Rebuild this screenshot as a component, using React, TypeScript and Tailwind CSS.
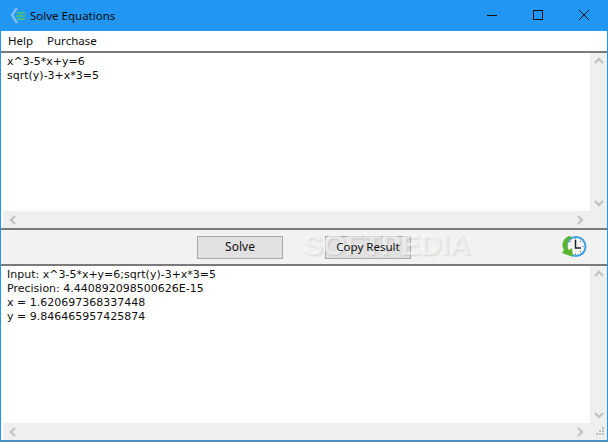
import React from 'react';

const font = { fontFamily: '"Noto Sans", "Liberation Sans", sans-serif' };

const Chevron = ({ dir }: { dir: 'up' | 'down' | 'left' | 'right' }) => {
  const d = {
    up: 'M1 7 L5 3 L9 7',
    down: 'M1 3 L5 7 L9 3',
    left: 'M7 1 L3 5 L7 9',
    right: 'M3 1 L7 5 L3 9',
  }[dir];
  return (
    <svg width="10" height="10" viewBox="0 0 10 10" fill="none">
      <path d={d} stroke="#c4c4c4" strokeWidth="2.4" />
    </svg>
  );
};

const TextPanel = ({ lines, grip, className }: { lines: string[]; grip?: boolean; className: string }) => (
  <div className={`flex flex-col border-t-2 border-[#7a7a7a] ${className}`}>
    <div className="flex flex-1 min-h-0">
      <div
        className="flex-1 bg-white pl-[6px] pt-[2px] text-[11px] leading-[14px] text-[#101010]"
        style={{ fontFamily: '"DejaVu Sans", sans-serif' }}
      >
        {lines.map((l) => (
          <div key={l} className="whitespace-pre">{l}</div>
        ))}
      </div>
      <div className="flex w-[17px] flex-col items-center justify-between bg-[#efefef] py-[3px]">
        <Chevron dir="up" />
        <Chevron dir="down" />
      </div>
    </div>
    <div className="ml-[2px] flex h-[17px] items-center justify-between bg-[#efefef] pl-[5px] pr-[2px]">
      <Chevron dir="left" />
      <div className="flex items-center">
        <Chevron dir="right" />
        <div className="flex w-[20px] justify-end">
          {grip && (
            <svg width="9" height="9" viewBox="0 0 9 9" fill="#bdbdbd">
              <rect x="6" y="0" width="2" height="2" />
              <rect x="3" y="3" width="2" height="2" />
              <rect x="6" y="3" width="2" height="2" />
              <rect x="0" y="6" width="2" height="2" />
              <rect x="3" y="6" width="2" height="2" />
              <rect x="6" y="6" width="2" height="2" />
            </svg>
          )}
        </div>
      </div>
    </div>
  </div>
);

export default function App() {
  return (
    <div className="relative flex h-[442px] w-[608px] flex-col overflow-hidden border-x border-b-2 border-x-[#2196f3] border-b-[#4a8fc0] bg-white" style={font}>
      <div className="flex h-[31px] shrink-0 items-center bg-[#2196f3] pl-[9px]">
        <svg width="20" height="20" viewBox="0 0 20 20" fill="none">
          <path d="M7 2 L2 9 L7 17" stroke="#7dbcf0" strokeWidth="2.5" />
          <path d="M7 7 H15 M6 10 H15 M7 13 H15" stroke="#45c08c" strokeWidth="2" />
        </svg>
        <span className="text-[11.5px] text-[#0b0b0b]">Solve Equations</span>
        <div className="ml-auto flex h-full items-center">
          <svg width="46" height="31" viewBox="0 0 46 31"><path d="M18 15.5 H28" stroke="#111" /></svg>
          <svg width="46" height="31" viewBox="0 0 46 31"><rect x="18.5" y="10.5" width="9" height="9" fill="none" stroke="#111" /></svg>
          <svg width="46" height="31" viewBox="0 0 46 31"><path d="M18 10 L28 20 M28 10 L18 20" stroke="#111" /></svg>
        </div>
      </div>

      <div className="flex h-[20px] shrink-0 items-center gap-[14px] bg-white pl-[7px] text-[11.5px] text-[#101010]">
        <span>Help</span>
        <span>Purchase</span>
      </div>

      <TextPanel className="h-[177px] shrink-0" lines={['x^3-5*x+y=6', 'sqrt(y)-3+x*3=5']} />

      <div className="flex h-[36px] shrink-0 items-center border-t-2 border-[#7a7a7a] bg-[#f2f2f2] pl-[196px]">
        <button className="h-[23px] w-[86px] border border-[#a8a8a8] bg-[#e1e1e1] text-[12px] text-[#101010]">
          <span className="relative z-10">Solve</span>
        </button>
        <button className="ml-[42px] h-[23px] w-[86px] border border-[#a8a8a8] bg-[#e1e1e1] text-[11.5px] text-[#101010]">
          <span className="relative z-10">Copy Result</span>
        </button>
        <svg className="ml-[150px]" width="26" height="24" viewBox="0 0 26 24">
          <circle cx="15" cy="11.5" r="10.5" fill="#3f9fe0" />
          <circle cx="15" cy="11.5" r="8.5" fill="#f6f6f6" />
          <path d="M14.5 5 V13 H20" fill="none" stroke="#222" strokeWidth="1.5" />
          <g fill="#555">
            <rect x="14" y="3.5" width="1" height="1" />
            <rect x="21.5" y="11" width="1" height="1" />
            <rect x="14" y="18.5" width="1" height="1" />
            <rect x="9" y="6" width="1" height="1" />
            <rect x="19" y="6" width="1" height="1" />
            <rect x="19" y="16" width="1" height="1" />
          </g>
          <path d="M8 1 C1 4 0 11 3 15 L1 18 L12 22 L11 13 L8 15 C5 11 6 5 11 2 Z" fill="#5cb531" />
        </svg>
      </div>

      <TextPanel
        className="flex-1 min-h-0"
        grip
        lines={[
          'Input: x^3-5*x+y=6;sqrt(y)-3+x*3=5',
          'Precision: 4.440892098500626E-15',
          'x = 1.620697368337448',
          'y = 9.846465957425874',
        ]}
      />

      <div
        className="pointer-events-none absolute left-[302px] top-[226px] text-[30px] font-bold leading-[38px] tracking-[-0.5px] text-white/60"
        style={{ textShadow: '1px 1px 2px rgba(0,0,0,0.12)', fontFamily: '"Liberation Sans", sans-serif' }}
      >
        SOFTPEDIA
      </div>
    </div>
  );
}
